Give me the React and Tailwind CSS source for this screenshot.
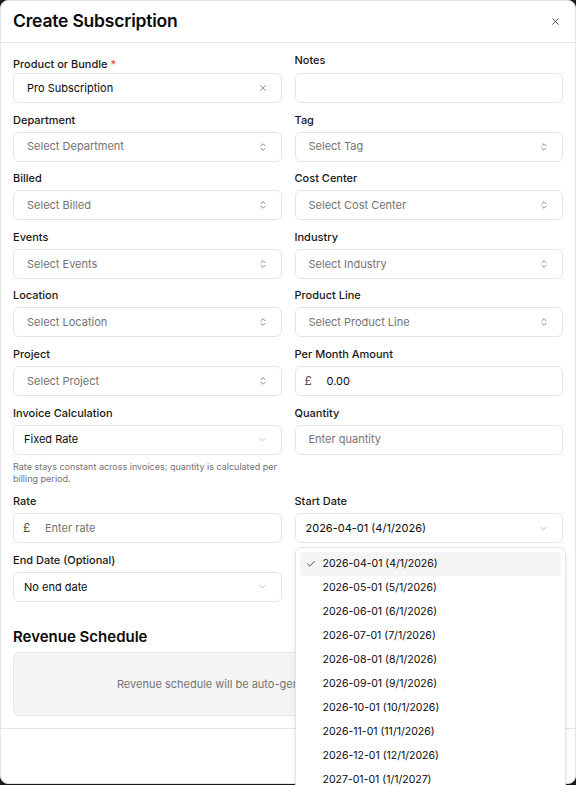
import React from "react";

const font = { fontFamily: "Inter, 'Noto Sans', 'Liberation Sans', sans-serif" };

function ChevronsUpDown() {
  return (
    <svg width="10" height="10" viewBox="0 0 24 24" fill="none" stroke="#737373" strokeWidth="2" strokeLinecap="round" strokeLinejoin="round">
      <path d="m7 15 5 5 5-5" />
      <path d="m7 9 5-5 5 5" />
    </svg>
  );
}

function ChevronDown() {
  return (
    <svg width="11" height="11" viewBox="0 0 24 24" fill="none" stroke="#a3a3a3" strokeWidth="1.6" strokeLinecap="round" strokeLinejoin="round">
      <path d="m6 9 6 6 6-6" />
    </svg>
  );
}

function XIcon({ size = 10, color = "#737373", width = 2 }) {
  return (
    <svg width={size} height={size} viewBox="0 0 24 24" fill="none" stroke={color} strokeWidth={width} strokeLinecap="round" strokeLinejoin="round">
      <path d="M18 6 6 18" />
      <path d="m6 6 12 12" />
    </svg>
  );
}

function Check() {
  return (
    <svg width="10" height="10" viewBox="0 0 24 24" fill="none" stroke="#262626" strokeWidth="2" strokeLinecap="round" strokeLinejoin="round">
      <path d="M20 6 9 17l-5-5" />
    </svg>
  );
}

function Label({ children, className = "" }) {
  return (
    <div className={"h-4 leading-4 text-[11px] font-medium text-[#171717] " + className}>{children}</div>
  );
}

function Box({ children, className = "" }) {
  return (
    <div className={"h-[30px] rounded-md border border-[#e5e5e5] bg-white flex items-center text-[11px] " + className}>
      {children}
    </div>
  );
}

function SelectField({ label, placeholder }) {
  return (
    <div className="flex flex-col">
      <Label>{label}</Label>
      <Box className="mt-1 pl-[13px] pr-[13px] justify-between">
        <span className="text-[#737373]">{placeholder}</span>
        <ChevronsUpDown />
      </Box>
    </div>
  );
}

const dates = [
  ["2026-04-01", "4/1/2026"],
  ["2026-05-01", "5/1/2026"],
  ["2026-06-01", "6/1/2026"],
  ["2026-07-01", "7/1/2026"],
  ["2026-08-01", "8/1/2026"],
  ["2026-09-01", "9/1/2026"],
  ["2026-10-01", "10/1/2026"],
  ["2026-11-01", "11/1/2026"],
  ["2026-12-01", "12/1/2026"],
  ["2027-01-01", "1/1/2027"],
];

export default function App() {
  return (
    <div className="h-[785px] w-[576px] overflow-hidden bg-[#1a1a1a]" style={font}>
      <div className="h-[784px] w-[576px] rounded-lg border border-[#e5e5e5] bg-white flex flex-col">
        {/* header */}
        <div className="h-[42px] shrink-0 border-b border-[#e5e5e5] flex items-center justify-between pl-3 pr-[14px]">
          <h2 className="text-[17.5px] font-semibold tracking-[-0.2px] text-[#0a0a0a]">Create Subscription</h2>
          <XIcon size={11} color="#404040" width={2} />
        </div>

        {/* form */}
        <div className="flex-1 px-3 pt-[9px] pb-[12px]">
          <div className="grid grid-cols-2 gap-x-[13px] gap-y-[8.6px]">
            <div className="flex flex-col">
              <Label className="translate-y-[4px]">
                Product or Bundle <span className="text-[#ef4444]">*</span>
              </Label>
              <Box className="mt-[5px] pl-[13px] pr-[13px] justify-between">
                <span className="text-[#0a0a0a]">Pro Subscription</span>
                <XIcon size={10} color="#737373" width={1.8} />
              </Box>
            </div>
            <div className="flex flex-col">
              <Label>Notes</Label>
              <Box className="mt-[5px] h-[29px]" />
            </div>

            <SelectField label="Department" placeholder="Select Department" />
            <SelectField label="Tag" placeholder="Select Tag" />
            <SelectField label="Billed" placeholder="Select Billed" />
            <SelectField label="Cost Center" placeholder="Select Cost Center" />
            <SelectField label="Events" placeholder="Select Events" />
            <SelectField label="Industry" placeholder="Select Industry" />
            <SelectField label="Location" placeholder="Select Location" />
            <SelectField label="Product Line" placeholder="Select Product Line" />
            <SelectField label="Project" placeholder="Select Project" />

            <div className="flex flex-col">
              <Label>Per Month Amount</Label>
              <Box className="mt-1 pl-[9px]">
                <span className="text-[#525252] text-[12px] w-[22px]">£</span>
                <span className="text-[#0a0a0a]">0.00</span>
              </Box>
            </div>

            <div className="flex flex-col">
              <Label>Invoice Calculation</Label>
              <Box className="mt-1 pl-[10px] pr-[13px] justify-between">
                <span className="text-[#0a0a0a]">Fixed Rate</span>
                <ChevronDown />
              </Box>
              <p className="mt-[6px] text-[9px] leading-[12px] text-[#737373]">
                Rate stays constant across invoices; quantity is calculated per billing period.
              </p>
            </div>
            <div className="flex flex-col">
              <Label>Quantity</Label>
              <Box className="mt-1 pl-[13px]">
                <span className="text-[#737373]">Enter quantity</span>
              </Box>
            </div>

            <div className="flex flex-col">
              <Label>Rate</Label>
              <Box className="mt-1 pl-[9px]">
                <span className="text-[#525252] text-[12px] w-[22px]">£</span>
                <span className="text-[#737373]">Enter rate</span>
              </Box>
            </div>
            <div className="flex flex-col relative">
              <Label>Start Date</Label>
              <Box className="mt-1 pl-[10px] pr-[13px] justify-between">
                <span className="text-[#0a0a0a]">2026-04-01 (4/1/2026)</span>
                <ChevronDown />
              </Box>
              {/* open date menu */}
              <div className="absolute left-0 top-full mt-[4px] z-10 w-[271px] rounded-md border border-[#e5e5e5] bg-white p-1 shadow-md">
                {dates.map(([iso, us], i) => (
                  <div
                    key={iso}
                    className={
                      "h-6 flex items-center rounded-sm text-[10.5px] text-[#0a0a0a] " +
                      (i === 0 ? "bg-[#f5f5f5]" : "")
                    }
                  >
                    <span className="w-[23px] pl-[6px] flex items-center">{i === 0 ? <Check /> : null}</span>
                    <span>
                      {iso} ({us})
                    </span>
                  </div>
                ))}
              </div>
            </div>

            <div className="flex flex-col">
              <Label>End Date (Optional)</Label>
              <Box className="mt-1 pl-[10px] pr-[13px] justify-between">
                <span className="text-[#0a0a0a]">No end date</span>
                <ChevronDown />
              </Box>
            </div>
          </div>

          {/* revenue schedule */}
          <h3 className="mt-[25px] text-[15px] leading-5 font-semibold text-[#0a0a0a]">Revenue Schedule</h3>
          <div className="mt-[5px] h-[64px] rounded-md border border-[#e5e5e5] bg-[#f5f5f5] flex items-center justify-center">
            <span className="text-[11px] text-[#737373]">
              Revenue schedule will be auto-generated based on the start date.
            </span>
          </div>
        </div>

        {/* footer */}
        <div className="h-[55px] shrink-0 border-t border-[#e5e5e5]" />
      </div>
    </div>
  );
}
